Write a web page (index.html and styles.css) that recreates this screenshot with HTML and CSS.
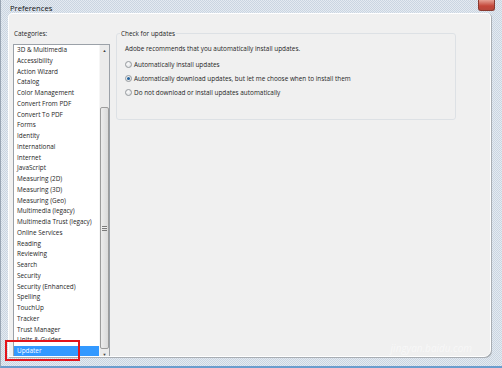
FILE: index.html
```html
<!DOCTYPE html>
<html lang="en">
<head>
    <meta charset="UTF-8">
    <title>Preferences</title>
    <link rel="stylesheet" href="styles.css">
</head>
<body>
    <div class="window">
        <div class="titlebar">
            <span class="title">Preferences</span>
            <span class="caption-x"></span>
        </div>
        <div class="panel">
            <div class="categories">
                <div class="categories-label">Categories:</div>
                <div class="listbox">
                    <ul class="category-list">
                        <li>3D &amp; Multimedia</li>
                        <li>Accessibility</li>
                        <li>Action Wizard</li>
                        <li>Catalog</li>
                        <li>Color Management</li>
                        <li>Convert From PDF</li>
                        <li>Convert To PDF</li>
                        <li>Forms</li>
                        <li>Identity</li>
                        <li>International</li>
                        <li>Internet</li>
                        <li>JavaScript</li>
                        <li>Measuring (2D)</li>
                        <li>Measuring (3D)</li>
                        <li>Measuring (Geo)</li>
                        <li>Multimedia (legacy)</li>
                        <li>Multimedia Trust (legacy)</li>
                        <li>Online Services</li>
                        <li>Reading</li>
                        <li>Reviewing</li>
                        <li>Search</li>
                        <li>Security</li>
                        <li>Security (Enhanced)</li>
                        <li>Spelling</li>
                        <li>TouchUp</li>
                        <li>Tracker</li>
                        <li>Trust Manager</li>
                        <li>Units &amp; Guides</li>
                        <li class="selected">Updater</li>
                    </ul>
                    <div class="scrollbar">
                        <span class="scroll-arrow">&#9650;</span>
                        <div class="scroll-thumb"><span class="grip"></span></div>
                        <span class="scroll-arrow">&#9660;</span>
                    </div>
                </div>
            </div>

            <fieldset class="updates-group">
                <legend>Check for updates</legend>
                <p class="updates-note">Adobe recommends that you automatically install updates.</p>
                <div class="radio-row"><span class="radio"></span>Automatically install updates</div>
                <div class="radio-row"><span class="radio checked"></span>Automatically download updates, but let me choose when to install them</div>
                <div class="radio-row"><span class="radio"></span>Do not download or install updates automatically</div>
            </fieldset>

            <div class="watermark">jingyan.baidu.com</div>
        </div>

        <!-- annotation box round the selected item -->
        <div class="highlight-box"></div>
    </div>
</body>
</html>
```

FILE: styles.css
```css
/* Basic Reset */
* {
    margin: 0;
    padding: 0;
    box-sizing: border-box;
}

body {
    font-family: 'Open Sans', sans-serif;
    font-size: 6.4px;
    color: #1e1e1e;
    overflow: hidden;
}

.window {
    position: relative;
    width: 502px;
    height: 368px;
    padding: 0 11px 11px 7px;
    background: repeating-conic-gradient(#cad5e1 0 25%, #e4eaf1 0 50%) 0 0 / 2px 2px;
    border-left: 1px solid #98a4b2;
    border-bottom: 2px solid #6a9ccd;
}

.titlebar {
    display: flex;
    align-items: flex-start;
    height: 13px;
}

.title {
    font-size: 7.6px;
    line-height: 10px;
    margin-top: 3px;
    margin-left: 2px;
    color: #111;
}

.caption-x {
    flex: none;
    margin-left: auto;
    margin-right: -4px;
    width: 17px;
    height: 11px;
    background-color: #c9584a;
    background-image: linear-gradient(#e6a194, #c4473a 60%, #b8483c);
    border: 1px solid #8a3a30;
    border-top: none;
    border-radius: 0 0 3px 3px;
}

.panel {
    position: relative;
    display: flex;
    align-items: flex-start;
    height: 344px;
    padding: 14px 0 0 4px;
    background-color: #f0f0f0;
    border: 1px solid #ffffff;
    border-radius: 4px 4px 7px 0;
    box-shadow: 1px 1px 0 #a8adb3;
    overflow: hidden;
}

.categories-label {
    line-height: 11px;
    margin-left: 1px;
    margin-bottom: 5px;
}

.listbox {
    display: flex;
    width: 97px;
    height: 320px;
    background-color: #ffffff;
    border: 1px solid #9ba1a8;
}

.category-list {
    list-style: none;
    width: 85px;
}

.category-list li {
    height: 10.75px;
    line-height: 10.75px;
    padding-left: 3px;
    white-space: nowrap;
}

.category-list li.selected {
    background-color: #3399ff;
    color: #ffffff;
}

.scrollbar {
    display: flex;
    flex-direction: column;
    align-items: center;
    width: 10px;
    background-color: #ebebeb;
    border-left: 1px solid #f6f6f6;
}

.scroll-arrow {
    height: 12px;
    font-size: 4px;
    line-height: 12px;
    color: #404040;
}

.scroll-thumb {
    display: flex;
    align-items: center;
    justify-content: center;
    width: 9px;
    height: 242px;
    margin-top: 50px;
    background: linear-gradient(90deg, #ececec, #dadada);
    border: 1px solid #9c9c9c;
    border-radius: 2px;
}

.grip {
    width: 5px;
    height: 5px;
    border-top: 1px solid #7a7a7a;
    border-bottom: 1px solid #7a7a7a;
    background: linear-gradient(#f0f0f0 0 1px, #7a7a7a 1px 2px, transparent 2px);
}

.updates-group {
    width: 340px;
    height: 92px;
    margin-left: 6px;
    padding: 0 8px 0 8px;
    border: 1px solid #dde1e5;
    border-radius: 3px;
}

.updates-group legend {
    margin-left: -5px;
    padding: 0 1px;
    line-height: 11px;
}

.updates-note {
    line-height: 11px;
    margin: 4px 0 3px;
}

.radio-row {
    display: flex;
    align-items: center;
    gap: 2px;
    height: 14px;
    white-space: nowrap;
}

.radio {
    display: flex;
    align-items: center;
    justify-content: center;
    width: 7px;
    height: 7px;
    border: 1px solid #969a9e;
    border-radius: 50%;
    background: radial-gradient(circle at 40% 35%, #fbfbfb, #d9dcdf);
}

.radio.checked::after {
    content: "";
    width: 3px;
    height: 3px;
    border-radius: 50%;
    background-color: #24639c;
}

.watermark {
    position: absolute;
    right: 18px;
    bottom: 1px;
    font-size: 10px;
    font-style: italic;
    color: rgba(255, 255, 255, 0.5);
}

.highlight-box {
    position: absolute;
    left: 4px;
    top: 340px;
    width: 75px;
    height: 21px;
    border: 2px solid #e3141c;
}
```
